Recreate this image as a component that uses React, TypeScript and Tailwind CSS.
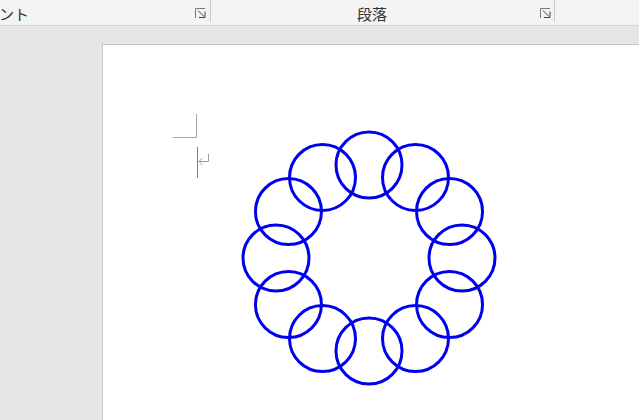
const ring = Array.from({ length: 12 }, (_, i) => {
  const a = (i * Math.PI) / 6;
  return { cx: 266 + 93 * Math.sin(a), cy: 213 - 93 * Math.cos(a) };
});

function Launcher() {
  return (
    <svg width="11" height="10" viewBox="0 0 11 10" className="block">
      <path d="M0.5 10V0.5H10" fill="none" stroke="#7a7a7a" strokeWidth="1" />
      <path d="M3 2.5L9 8.5" fill="none" stroke="#444" strokeWidth="1" />
      <path d="M4 9.5H10V3.5" fill="none" stroke="#444" strokeWidth="1" />
    </svg>
  );
}

export default function App() {
  return (
    <div
      className="w-[639px] h-[420px] overflow-hidden bg-[#e6e6e6] flex flex-col"
      style={{ fontFamily: '"Noto Sans CJK JP", "Noto Sans", sans-serif' }}
    >
      {/* ribbon group labels */}
      <div className="h-[26px] shrink-0 flex bg-[#f3f3f3] border-b border-[#d4d4d4] text-[15px] text-[#333]">
        <div className="w-[211px] h-[22px] flex items-center border-r border-[#c8c8c8] overflow-hidden">
          <span className="-ml-[31px] leading-none pt-[5px] whitespace-nowrap">フォント</span>
          <div className="ml-auto mr-[4px] mt-[3px]">
            <Launcher />
          </div>
        </div>
        <div className="w-[344px] h-[22px] flex items-center border-r border-[#c8c8c8]">
          <span className="ml-[146px] leading-none pt-[5px] whitespace-nowrap">段落</span>
          <div className="ml-auto mr-[3px] mt-[3px]">
            <Launcher />
          </div>
        </div>
      </div>

      {/* document area */}
      <div className="flex-1 pl-[102px] pt-[18px]">
        <div className="h-full bg-white border-l border-t border-[#c6c6c6]">
          <svg width="536" height="376" viewBox="0 0 536 376" className="block">
            <path d="M93.5 69V92.5H70" fill="none" stroke="#a6a6a6" strokeWidth="1" />
            <path d="M94.5 102V133" fill="none" stroke="#7f7f7f" strokeWidth="1" />
            <path
              d="M105.5 109V116.5H96M96 116.5L99.5 113M96 116.5L99.5 120"
              fill="none"
              stroke="#9a9a9a"
              strokeWidth="1"
            />
            {ring.map((c, i) => (
              <circle
                key={i}
                cx={c.cx}
                cy={c.cy}
                r="33"
                fill="none"
                stroke="#0000f0"
                strokeWidth="3"
              />
            ))}
          </svg>
        </div>
      </div>
    </div>
  );
}
